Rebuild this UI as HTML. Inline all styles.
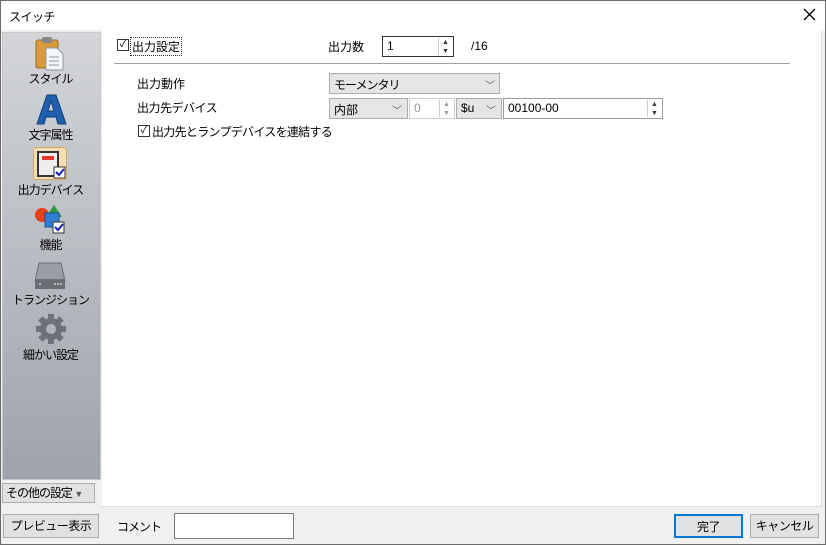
<!DOCTYPE html><html><head><meta charset="utf-8"><style>
*{box-sizing:border-box;margin:0;padding:0}
body{width:826px;height:545px;background:#f0f0f0;font-family:"Liberation Sans","Noto Sans CJK JP",sans-serif;font-size:12px;color:#000;position:relative;overflow:hidden}
.frame{left:0;top:0;width:826px;height:545px;border:1px solid #6a6a6a;pointer-events:none}
.a{position:absolute}
.title{left:0;top:0;width:826px;height:30px;background:#fff}
.side{left:2px;top:32px;width:99px;height:448px;background:linear-gradient(#d3d5d9,#9ea3ab);border:1px solid #c8c8c8}
.lbl{width:97px;text-align:center;font-size:12px;letter-spacing:-1px}
.main{left:102px;top:30px;width:720px;height:477px;background:#fff;border-right:1px solid #ddd;border-bottom:1px solid #ddd}
.sel{background:#e5e5e5;border:1px solid #adadad;height:21px;padding:2px 4px;font-size:12px}
.chev{position:absolute;right:5px;top:3px;font-size:10px;color:#555}
.btn{background:#e1e1e1;border:1px solid #adadad;height:24px;text-align:center;line-height:22px;letter-spacing:-0.5px}
.cb{width:12px;height:12px;border:1px solid #333;background:#fff;font-size:10px;line-height:10px;text-align:center}
.spin{width:14px;border-left:1px solid #ccc;font-size:7px;text-align:center;line-height:9px;color:#333}
</style></head><body>
<div class="a title"></div>
<div class="a" style="left:9px;top:8px;letter-spacing:-0.5px">スイッチ</div>
<svg class="a" style="left:803px;top:8px" width="13" height="13"><path d="M1 1L12 12M12 1L1 12" stroke="#000" stroke-width="1.3"/></svg>
<div class="a side"></div>
<svg class="a" style="left:34px;top:36px" width="32" height="36"><rect x="2" y="4" width="22" height="28" rx="2" fill="#d89a3c" stroke="#9a6a20"/><rect x="8" y="1" width="10" height="6" rx="2" fill="#888"/><path d="M12 12h11l6 6v16H12z" fill="#f4f6f8" stroke="#8a98a8"/><path d="M15 21h10M15 25h10M15 29h10" stroke="#8a98a8"/></svg>
<div class="a lbl" style="left:2px;top:70px">スタイル</div>
<svg class="a" style="left:35px;top:93px" width="32" height="32"><path d="M2 31L12 2h9l10 29h-8l-2-7H11l-2 7zM13 18h6l-3-10z" fill="#1f5fae" stroke="#133d78"/></svg>
<div class="a lbl" style="left:2px;top:126px">文字属性</div>
<div class="a" style="left:33px;top:147px;width:34px;height:33px;border:1px solid #d7a55a;background:#f5deb3;border-radius:3px"></div>
<svg class="a" style="left:37px;top:150px" width="30" height="30"><rect x="1" y="2" width="20" height="24" fill="#eee" stroke="#333" stroke-width="2"/><rect x="5" y="6" width="12" height="4" fill="#e33"/><rect x="17" y="17" width="11" height="11" fill="#fff" stroke="#333"/><path d="M19 22l3 3 5-6" stroke="#12a" stroke-width="2" fill="none"/></svg>
<div class="a lbl" style="left:2px;top:181px">出力デバイス</div>
<svg class="a" style="left:34px;top:203px" width="34" height="32"><circle cx="8" cy="12" r="7" fill="#e5411b"/><path d="M20 2l8 12H12z" fill="#2a9a3a"/><rect x="11" y="10" width="14" height="14" fill="#2f7fd5" stroke="#1a4f90"/><rect x="19" y="19" width="11" height="11" fill="#fff" stroke="#333"/><path d="M21 24l3 3 5-6" stroke="#12a" stroke-width="2" fill="none"/></svg>
<div class="a lbl" style="left:2px;top:236px">機能</div>
<svg class="a" style="left:34px;top:259px" width="32" height="32"><path d="M5 4h22l4 18H1z" fill="#9a9ea4" stroke="#6a6e74"/><rect x="1" y="20" width="30" height="10" fill="#6a6e74"/><path d="M5 25h2M20 25h2M23 25h2M26 25h2" stroke="#fff"/></svg>
<div class="a lbl" style="left:2px;top:291px">トランジション</div>
<svg class="a" style="left:35px;top:313px" width="32" height="32"><g fill="#6e7278"><circle cx="16" cy="16" r="11"/><rect x="13" y="1" width="6" height="30"/><rect x="1" y="13" width="30" height="6"/><rect x="13" y="1" width="6" height="30" transform="rotate(45 16 16)"/><rect x="13" y="1" width="6" height="30" transform="rotate(-45 16 16)"/></g><circle cx="16" cy="16" r="5" fill="#b0b4ba"/></svg>
<div class="a lbl" style="left:2px;top:346px">細かい設定</div>
<div class="a btn" style="left:2px;top:483px;width:93px;height:20px;line-height:18px;text-align:left;padding-left:3px;letter-spacing:-1px">その他の設定 <span style="font-size:9px;color:#555">▼</span></div>
<div class="a main"></div>
<div class="a cb" style="left:117px;top:39px">✓</div>
<div class="a" style="left:130px;top:37px;border:1px dotted #333;padding:0 1px">出力設定</div>
<div class="a" style="left:328px;top:38px">出力数</div>
<div class="a" style="left:382px;top:36px;width:72px;height:21px;border:1px solid #333;padding:2px 4px">1</div>
<div class="a spin" style="left:438px;top:38px;height:18px">▲<br>▼</div>
<div class="a" style="left:471px;top:39px">/16</div>
<div class="a" style="left:114px;top:63px;width:676px;height:1px;background:#a0a0a0"></div>
<div class="a" style="left:137px;top:75px">出力動作</div>
<div class="a sel" style="left:329px;top:73px;width:171px;letter-spacing:-1px">モーメンタリ<span class="chev">﹀</span></div>
<div class="a" style="left:137px;top:99px;letter-spacing:-0.5px">出力先デバイス</div>
<div class="a sel" style="left:329px;top:98px;width:79px">内部<span class="chev">﹀</span></div>
<div class="a" style="left:409px;top:98px;width:46px;height:21px;border:1px solid #ccc;padding:2px 4px;color:#999">0</div>
<div class="a spin" style="left:439px;top:100px;height:17px;color:#999">▲<br>▼</div>
<div class="a sel" style="left:456px;top:98px;width:46px">$u<span class="chev">﹀</span></div>
<div class="a" style="left:503px;top:98px;width:160px;height:21px;border:1px solid #999;padding:2px 4px">00100-00</div>
<div class="a spin" style="left:647px;top:100px;height:17px">▲<br>▼</div>
<div class="a cb" style="left:138px;top:125px">✓</div>
<div class="a" style="left:152px;top:123px;letter-spacing:-0.7px">出力先とランプデバイスを連結する</div>
<div class="a btn" style="left:3px;top:514px;width:96px">プレビュー表示</div>
<div class="a" style="left:117px;top:518px;letter-spacing:-1px">コメント</div>
<div class="a" style="left:174px;top:513px;width:120px;height:26px;border:1px solid #7a7a7a;background:#fff"></div>
<div class="a btn" style="left:674px;top:514px;width:69px;border:2px solid #0078d7">完了</div>
<div class="a btn" style="left:750px;top:514px;width:69px">キャンセル</div>
<div class="a frame"></div>
</body></html>
